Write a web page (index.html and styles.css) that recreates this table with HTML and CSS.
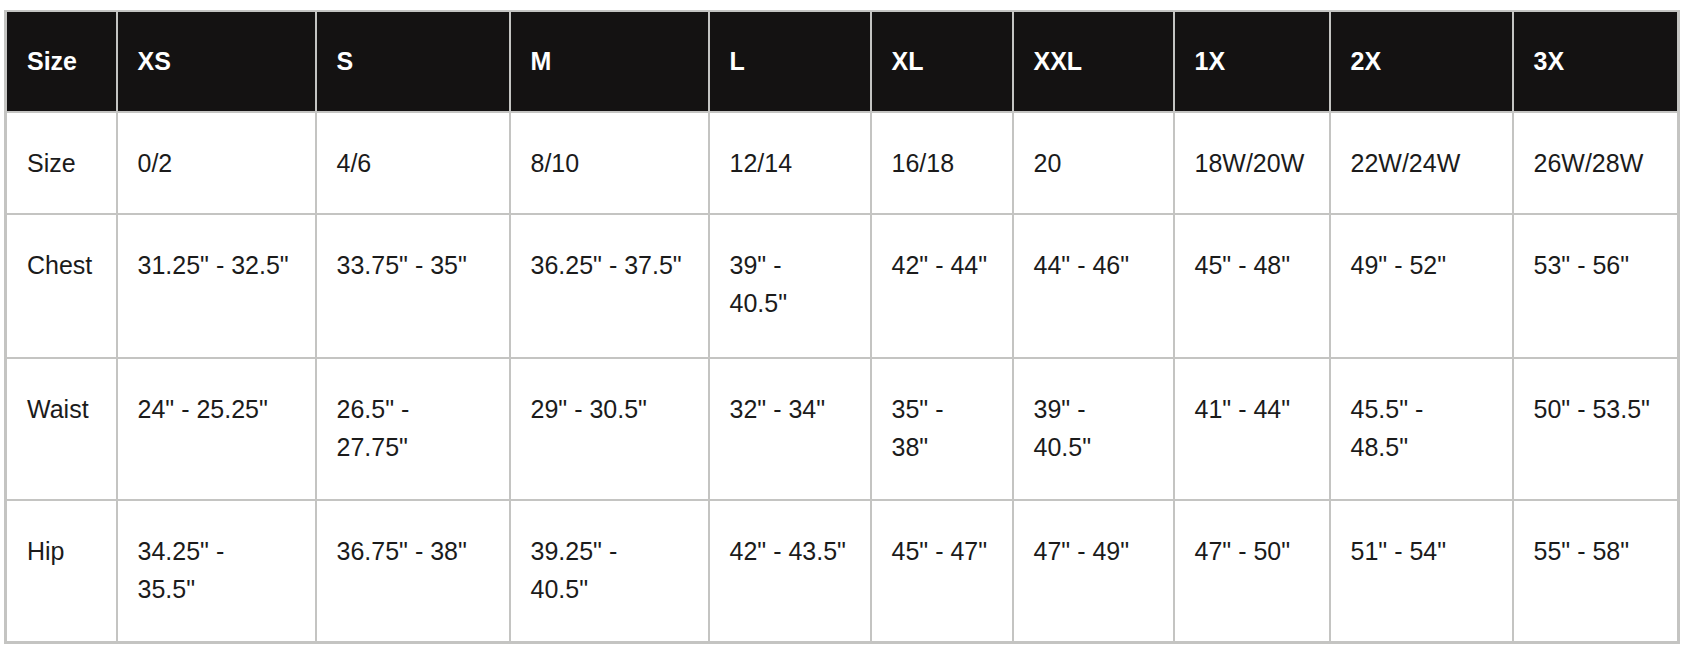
FILE: index.html
```html
<!DOCTYPE html>
<html lang="en">
<head>
<meta charset="utf-8">
<title>Size Chart</title>
<link rel="stylesheet" href="styles.css">
</head>
<body>
<div class="wrap">
<table class="chart">
  <colgroup>
    <col class="c1"><col class="c2"><col class="c3"><col class="c4"><col class="c5">
    <col class="c6"><col class="c7"><col class="c8"><col class="c9"><col class="c10">
  </colgroup>
  <thead>
    <tr>
      <th>Size</th><th>XS</th><th>S</th><th>M</th><th>L</th><th>XL</th><th>XXL</th><th>1X</th><th>2X</th><th>3X</th>
    </tr>
  </thead>
  <tbody>
    <tr class="short">
      <td>Size</td><td>0/2</td><td>4/6</td><td>8/10</td><td>12/14</td><td>16/18</td><td>20</td><td>18W/20W</td><td>22W/24W</td><td>26W/28W</td>
    </tr>
    <tr class="chest">
      <td>Chest</td><td>31.25" - 32.5"</td><td>33.75" - 35"</td><td>36.25" - 37.5"</td><td>39" -<br>40.5"</td><td>42" - 44"</td><td>44" - 46"</td><td>45" - 48"</td><td>49" - 52"</td><td>53" - 56"</td>
    </tr>
    <tr>
      <td>Waist</td><td>24" - 25.25"</td><td>26.5" -<br>27.75"</td><td>29" - 30.5"</td><td>32" - 34"</td><td>35" -<br>38"</td><td>39" -<br>40.5"</td><td>41" - 44"</td><td>45.5" -<br>48.5"</td><td>50" - 53.5"</td>
    </tr>
    <tr>
      <td>Hip</td><td>34.25" -<br>35.5"</td><td>36.75" - 38"</td><td>39.25" -<br>40.5"</td><td>42" - 43.5"</td><td>45" - 47"</td><td>47" - 49"</td><td>47" - 50"</td><td>51" - 54"</td><td>55" - 58"</td>
    </tr>
  </tbody>
</table>
</div>
</body>
</html>
```

FILE: styles.css
```css
html, body {
  margin: 0;
  padding: 0;
  background: #ffffff;
}

.wrap {
  padding: 10px 7px 0 4px;
}

.chart {
  width: 1673px;
  table-layout: fixed;
  border-collapse: collapse;
  border: 3px solid #c4c4c2;
  border-top-width: 2px;
  font-family: "Liberation Sans", Arial, sans-serif;
  font-size: 25px;
  line-height: 38px;
  color: #1b1b1b;
}

.c1 { width: 111px; }
.c2 { width: 199px; }
.c3 { width: 194px; }
.c4 { width: 199px; }
.c5 { width: 162px; }
.c6 { width: 142px; }
.c7 { width: 161px; }
.c8 { width: 156px; }
.c9 { width: 183px; }
.c10 { width: 166px; }

.chart th,
.chart td {
  border: 2px solid #c4c4c2;
  padding: 31px 6px 33px 20px;
  text-align: left;
  vertical-align: top;
  white-space: nowrap;
}

.chart .short td {
  padding-bottom: 31px;
}

.chart .chest td {
  padding-bottom: 35px;
}

.chart th {
  background: #141212;
  color: #ffffff;
  font-weight: 700;
  font-size: 25px;
  padding-top: 30px;
  padding-bottom: 31px;
}
```
